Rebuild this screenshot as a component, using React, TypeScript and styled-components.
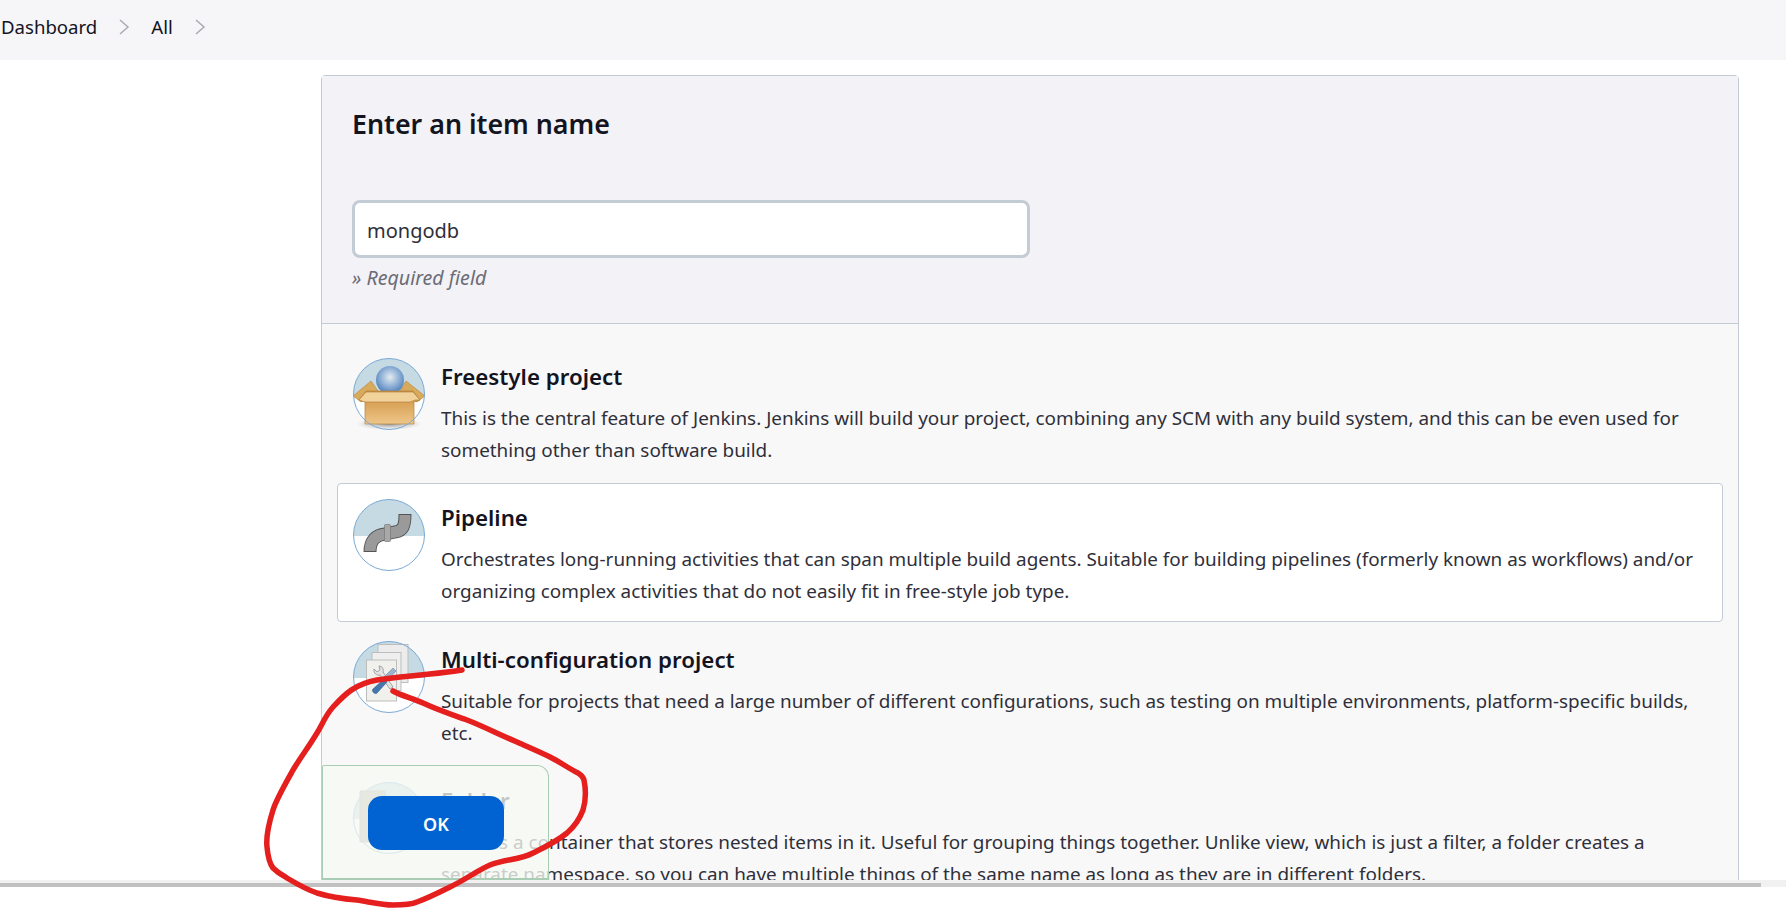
import styled, { createGlobalStyle } from 'styled-components';

const GlobalStyle = createGlobalStyle`
  html, body { margin: 0; padding: 0; background: #fff; overflow: hidden; }
  body { font-family: 'Noto Sans', 'Open Sans', sans-serif; color: #14141f; }
`;

const Page = styled.div`
  position: relative;
  height: 910px;
  overflow: hidden;
`;

const Viewport = styled.div`
  height: 880px;
  overflow: hidden;
  position: relative;
`;

const TopBar = styled.nav`
  display: flex;
  align-items: center;
  height: 60px;
  padding: 0 0 7px 1px;
  box-sizing: border-box;
  background: #f6f6f9;
  font-size: 18.6px;
  color: #14141f;
`;

const Crumb = styled.span`
  line-height: 24px;
`;

const Chevron = styled.svg`
  width: 12px;
  height: 18px;
  margin: 0 21px;
  fill: none;
  stroke: #a9a9b4;
  stroke-width: 1.5;
`;

const Main = styled.main`
  padding: 15px 47px 0 321px;
`;

const Card = styled.section`
  border: 1px solid #c3ccd4;
  border-radius: 4px;
  background: #f8f8f8;
`;

const CardHeader = styled.header`
  background: #f2f2f7;
  border-bottom: 1px solid #c3ccd4;
  padding: 30px 30px 29px;
  height: 248px;
  box-sizing: border-box;
`;

const Heading = styled.h1`
  margin: 0;
  font-size: 26.8px;
  line-height: 36px;
  font-weight: 600;
`;

const NameInput = styled.div`
  width: 678px;
  height: 58px;
  margin-top: 58px;
  box-sizing: border-box;
  padding: 3px 0 0 12px;
  display: flex;
  align-items: center;
  background: #fff;
  border: 3px solid #c3ccd4;
  border-radius: 8px;
  font-size: 20px;
  color: #2f2f3a;
`;

const Hint = styled.div`
  margin-top: 7px;
  font-size: 19.6px;
  line-height: 26px;
  font-style: italic;
  color: #6b6b75;
`;

const ItemList = styled.div`
  padding: 18px 15px 0;
`;

const Item = styled.div<{ $selected?: boolean }>`
  display: flex;
  gap: 16px;
  padding: 15px;
  height: 139px;
  box-sizing: border-box;
  margin-bottom: 2.4px;
  border: 1px solid ${p => (p.$selected ? '#c3ccd4' : 'transparent')};
  border-radius: 4px;
  background: ${p => (p.$selected ? '#fff' : 'transparent')};
`;

const IconSlot = styled.svg`
  flex: none;
  width: 72px;
  height: 72px;
  overflow: visible;
`;

const ItemBody = styled.div`
  flex: 1;
  padding-top: 4px;
`;

const ItemTitle = styled.h2`
  margin: 0;
  font-size: 22.3px;
  line-height: 30px;
  font-weight: 600;
`;

const ItemText = styled.p`
  margin: 10px 0 0;
  font-size: 18.9px;
  line-height: 32px;
  color: #2f2f3a;
`;

const StickyBar = styled.div`
  position: absolute;
  left: 322px;
  top: 765px;
  width: 227px;
  height: 115px;
  box-sizing: border-box;
  border: 1px solid #a9cdb4;
  border-bottom-width: 2px;
  border-radius: 2px 12px 0 0;
  background: rgba(245, 248, 242, 0.78);
`;

const OkButton = styled.button`
  position: absolute;
  left: 45px;
  top: 30px;
  width: 136px;
  height: 54px;
  padding: 2px 0 0;
  border: none;
  border-radius: 14px;
  background: #0063d1;
  color: #fff;
  font: 600 18px 'Noto Sans', sans-serif;
`;

const ScrollTrack = styled.div`
  height: 7px;
  background: #f1f1f1;
  display: flex;
  align-items: flex-end;
`;

const ScrollThumb = styled.div`
  width: 1761px;
  height: 4px;
  background: #c1c1c1;
`;

const Annotation = styled.svg`
  position: absolute;
  inset: 0;
  width: 1786px;
  height: 910px;
  pointer-events: none;
`;

const Disc = ({ id }: { id: string }) => (
  <>
    <clipPath id={id}>
      <circle cx="36" cy="36" r="35.5" />
    </clipPath>
    <circle cx="36" cy="36" r="35.5" fill="#fff" />
    <rect x="0" y="0" width="72" height="37" fill="#c5dae3" clipPath={`url(#${id})`} />
  </>
);

const Ring = () => <circle cx="36" cy="36" r="35.5" fill="none" stroke="#7aa9d6" />;

const FreestyleIcon = () => (
  <IconSlot viewBox="0 0 72 72">
    <defs>
      <radialGradient id="ball" cx="0.5" cy="0.4" r="0.6">
        <stop offset="0" stopColor="#e4ebf0" />
        <stop offset="0.55" stopColor="#8fb0d6" />
        <stop offset="1" stopColor="#4f7fb8" />
      </radialGradient>
      <linearGradient id="crate" x1="0" y1="0" x2="0" y2="1">
        <stop offset="0" stopColor="#c98f3c" />
        <stop offset="0.45" stopColor="#dca75e" />
        <stop offset="1" stopColor="#eec68a" />
      </linearGradient>
      <radialGradient id="shade" cx="0.5" cy="0.5" r="0.5">
        <stop offset="0" stopColor="#666" stopOpacity="0.7" />
        <stop offset="1" stopColor="#999" stopOpacity="0" />
      </radialGradient>
    </defs>
    <Disc id="clipA" />
    <ellipse cx="36" cy="66" rx="33" ry="6" fill="url(#shade)" />
    <path d="M0 38L18 23L25 33L8 44Z M72 38L53 23L47 33L64 44Z" fill="#d9a95c" stroke="#b5853f" strokeWidth="0.6" />
    <circle cx="37" cy="22" r="14" fill="url(#ball)" />
    <path d="M13 33H60L67 42L61 44V66H12V44L6 42Z" fill="url(#crate)" stroke="#b5853f" strokeWidth="0.7" />
    <path d="M6 42L13 34H60L67 42H62L57 44H12Z" fill="#f2d29b" stroke="#b5853f" strokeWidth="0.7" />
    <Ring />
  </IconSlot>
);

const PipelineIcon = () => (
  <IconSlot viewBox="0 0 72 72">
    <Disc id="clipB" />
    <path d="M17 53C17 41 23 36 32 35L42 33C50 32 52 27 52 15" fill="none" stroke="#555" strokeWidth="13" />
    <path d="M17 52C17 41 23 36 32 35L42 33C50 32 52 27 52 16" fill="none" stroke="#9a9a9a" strokeWidth="11" />
    <rect x="31.5" y="25.5" width="6" height="17" rx="1" fill="#a8a8a8" stroke="#777" strokeWidth="0.7" />
    <Ring />
  </IconSlot>
);

const MultiConfigIcon = () => (
  <IconSlot viewBox="0 0 72 72">
    <Disc id="clipC" />
    <rect x="25" y="3.5" width="30" height="38" fill="#ececec" stroke="#bdbdbd" />
    <rect x="19" y="11.5" width="29" height="38" fill="#efefef" stroke="#bdbdbd" />
    <rect x="13.5" y="19" width="30" height="41" fill="#f0f0ec" stroke="#bdbdbd" />
    <path d="M21 28L24 31L27 29L26 25C29 25 31 28 30 31L40 46L37 48L27 34C24 35 20 32 21 28Z" fill="#e4e4e4" stroke="#8f8f8f" strokeWidth="0.8" />
    <path d="M40 27L43 30L33 41L29 38Z" fill="#9cb3cc" stroke="#6e87a5" strokeWidth="0.6" />
    <path d="M31 38L34 41L24 52C22 54 18 50 20 48Z" fill="#4576ad" stroke="#2f5a8d" strokeWidth="0.6" />
    <Ring />
  </IconSlot>
);

const FolderIcon = () => (
  <IconSlot viewBox="0 0 72 72">
    <Disc id="clipD" />
    <rect x="14" y="40" width="22" height="20" fill="#8db4d8" />
    <rect x="7" y="9" width="25" height="51" rx="1" fill="#b5b0a0" stroke="#999" />
    <Ring />
  </IconSlot>
);

const items = [
  { title: 'Freestyle project', icon: <FreestyleIcon />, text: 'This is the central feature of Jenkins. Jenkins will build your project, combining any SCM with any build system, and this can be even used for something other than software build.' },
  { title: 'Pipeline', icon: <PipelineIcon />, selected: true, text: 'Orchestrates long-running activities that can span multiple build agents. Suitable for building pipelines (formerly known as workflows) and/or organizing complex activities that do not easily fit in free-style job type.' },
  { title: 'Multi-configuration project', icon: <MultiConfigIcon />, text: 'Suitable for projects that need a large number of different configurations, such as testing on multiple environments, platform-specific builds, etc.' },
  { title: 'Folder', icon: <FolderIcon />, text: 'Creates a container that stores nested items in it. Useful for grouping things together. Unlike view, which is just a filter, a folder creates a separate namespace, so you can have multiple things of the same name as long as they are in different folders.' },
];

const App = () => (
  <Page>
    <GlobalStyle />
    <Viewport>
      <TopBar>
        <Crumb>Dashboard</Crumb>
        <Chevron viewBox="0 0 12 18"><path d="M2 2l8 7-8 7" /></Chevron>
        <Crumb>All</Crumb>
        <Chevron viewBox="0 0 12 18"><path d="M2 2l8 7-8 7" /></Chevron>
      </TopBar>
      <Main>
        <Card>
          <CardHeader>
            <Heading>Enter an item name</Heading>
            <NameInput>mongodb</NameInput>
            <Hint>» Required field</Hint>
          </CardHeader>
          <ItemList>
            {items.map(item => (
              <Item key={item.title} $selected={item.selected}>
                {item.icon}
                <ItemBody>
                  <ItemTitle>{item.title}</ItemTitle>
                  <ItemText>{item.text}</ItemText>
                </ItemBody>
              </Item>
            ))}
          </ItemList>
        </Card>
      </Main>
      <StickyBar><OkButton>OK</OkButton></StickyBar>
    </Viewport>
    <ScrollTrack><ScrollThumb /></ScrollTrack>
    <Annotation viewBox="0 0 1786 910">
      <path
        d="M462 670C440 674 420 674 377 680C355 684 345 694 333 707C325 716 322 725 317 733C308 748 302 755 293 770C284 786 276 800 273 810C268 826 266 838 267 847C268 858 270 864 273 868C278 873 282 875 287 878C297 884 305 889 317 893C330 897 345 899 357 900C370 902 382 905 393 905C402 905 410 905 417 902C428 898 438 893 450 887C465 880 478 870 490 865C505 859 520 860 533 853C545 847 556 842 567 833C575 826 580 818 583 810C586 800 586 790 584 780C583 776 581 775 578 773C568 768 560 762 550 757C540 752 528 747 517 742C500 735 485 727 467 720C450 714 438 710 423 703C412 698 402 696 393 691"
        fill="none"
        stroke="#e51e1e"
        strokeWidth="5.5"
        strokeLinecap="round"
        strokeLinejoin="round"
      />
    </Annotation>
  </Page>
);

export default App;
